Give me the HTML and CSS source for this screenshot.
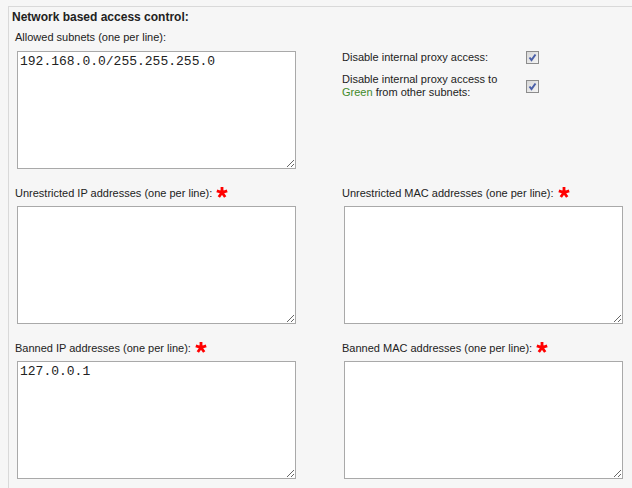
FILE: index.html
```html
<!DOCTYPE html>
<html lang="en">
<head>
<meta charset="UTF-8">
<title>Network based access control</title>
<link rel="stylesheet" href="styles.css">
</head>
<body>
<div class="panel">
    <h3>Network based access control:</h3>
    <div class="fields">
        <div class="field">
            <label class="field-label" for="subnets">Allowed subnets (one per line):</label>
            <textarea id="subnets">192.168.0.0/255.255.255.0</textarea>
        </div>
        <div class="options">
            <div class="option">
                <span>Disable internal proxy access:</span>
                <svg class="check" width="13" height="13" viewBox="0 0 13 13">
                    <defs><linearGradient id="cb" x1="0" y1="0" x2="1" y2="1"><stop offset="0" stop-color="#d6d6d6"/><stop offset="1" stop-color="#f6f6f6"/></linearGradient></defs>
                    <rect x="0.5" y="0.5" width="12" height="12" fill="url(#cb)" stroke="#8c8c8c"/>
                    <path d="M3.5 6.5 L5.5 9 L9.5 3.5" fill="none" stroke="#4a5fa8" stroke-width="2"/>
                </svg>
            </div>
            <div class="option">
                <span>Disable internal proxy access to <span class="green">Green</span> from other subnets:</span>
                <svg class="check" width="13" height="13" viewBox="0 0 13 13">
                    <rect x="0.5" y="0.5" width="12" height="12" fill="url(#cb)" stroke="#8c8c8c"/>
                    <path d="M3.5 6.5 L5.5 9 L9.5 3.5" fill="none" stroke="#4a5fa8" stroke-width="2"/>
                </svg>
            </div>
        </div>

        <div class="field">
            <label class="field-label" for="unrestricted-ip">Unrestricted IP addresses (one per line):<svg class="req" width="12" height="12" viewBox="0 0 12 12"><path d="M6 6.5L6 1M6 6.5L11.2 4.8M6 6.5L9.2 11M6 6.5L2.8 11M6 6.5L0.8 4.8"/></svg></label>
            <textarea id="unrestricted-ip"></textarea>
        </div>
        <div class="field">
            <label class="field-label" for="unrestricted-mac">Unrestricted MAC addresses (one per line):<svg class="req" width="12" height="12" viewBox="0 0 12 12"><path d="M6 6.5L6 1M6 6.5L11.2 4.8M6 6.5L9.2 11M6 6.5L2.8 11M6 6.5L0.8 4.8"/></svg></label>
            <textarea id="unrestricted-mac"></textarea>
        </div>

        <div class="field">
            <label class="field-label" for="banned-ip">Banned IP addresses (one per line):<svg class="req" width="12" height="12" viewBox="0 0 12 12"><path d="M6 6.5L6 1M6 6.5L11.2 4.8M6 6.5L9.2 11M6 6.5L2.8 11M6 6.5L0.8 4.8"/></svg></label>
            <textarea id="banned-ip">127.0.0.1</textarea>
        </div>
        <div class="field">
            <label class="field-label" for="banned-mac">Banned MAC addresses (one per line):<svg class="req" width="12" height="12" viewBox="0 0 12 12"><path d="M6 6.5L6 1M6 6.5L11.2 4.8M6 6.5L9.2 11M6 6.5L2.8 11M6 6.5L0.8 4.8"/></svg></label>
            <textarea id="banned-mac"></textarea>
        </div>
    </div>
</div>
</body>
</html>
```

FILE: styles.css
```css
body {
    margin: 0;
    background-color: #f6f6f6;
    font-family: "Liberation Sans", Arial, sans-serif;
    color: #222;
    overflow: hidden;
}
.panel {
    box-sizing: border-box;
    height: 482px;
    margin: 6px 0 0 8px;
    padding: 3px 0 0 3px;
    border-top: 1px solid #d9d9d9;
    border-left: 1px solid #d9d9d9;
}
h3 {
    margin: 0 0 7px 0;
    font-size: 12px;
    line-height: 14px;
    font-weight: bold;
}
.fields {
    display: grid;
    grid-template-columns: 327px 1fr;
    row-gap: 17px;
    padding-left: 3px;
}
.field-label {
    display: block;
    height: 13px;
    font-size: 11px;
    line-height: 13px;
    margin-bottom: 7px;
}
.req {
    margin-left: 4px;
    vertical-align: -1px;
}
.req path {
    fill: none;
    stroke: #ff0000;
    stroke-width: 2.8;
}
textarea {
    display: block;
    box-sizing: border-box;
    width: 279px;
    height: 118px;
    margin: 0 0 0 2px;
    padding: 2px;
    border: 1px solid #a9a9a9;
    background-color: #fff;
    color: #222;
    font-family: "Liberation Mono", "Courier New", monospace;
    font-size: 13px;
    line-height: 15px;
    outline: none;
}
.options {
    display: flex;
    flex-direction: column;
    gap: 9px;
    margin-top: 20px;
}
.option {
    display: grid;
    grid-template-columns: 172px 13px;
    column-gap: 12px;
    align-items: center;
    font-size: 11px;
    line-height: 13px;
}
.check {
    display: block;
}
.green {
    color: #3f8a2a;
}
```
